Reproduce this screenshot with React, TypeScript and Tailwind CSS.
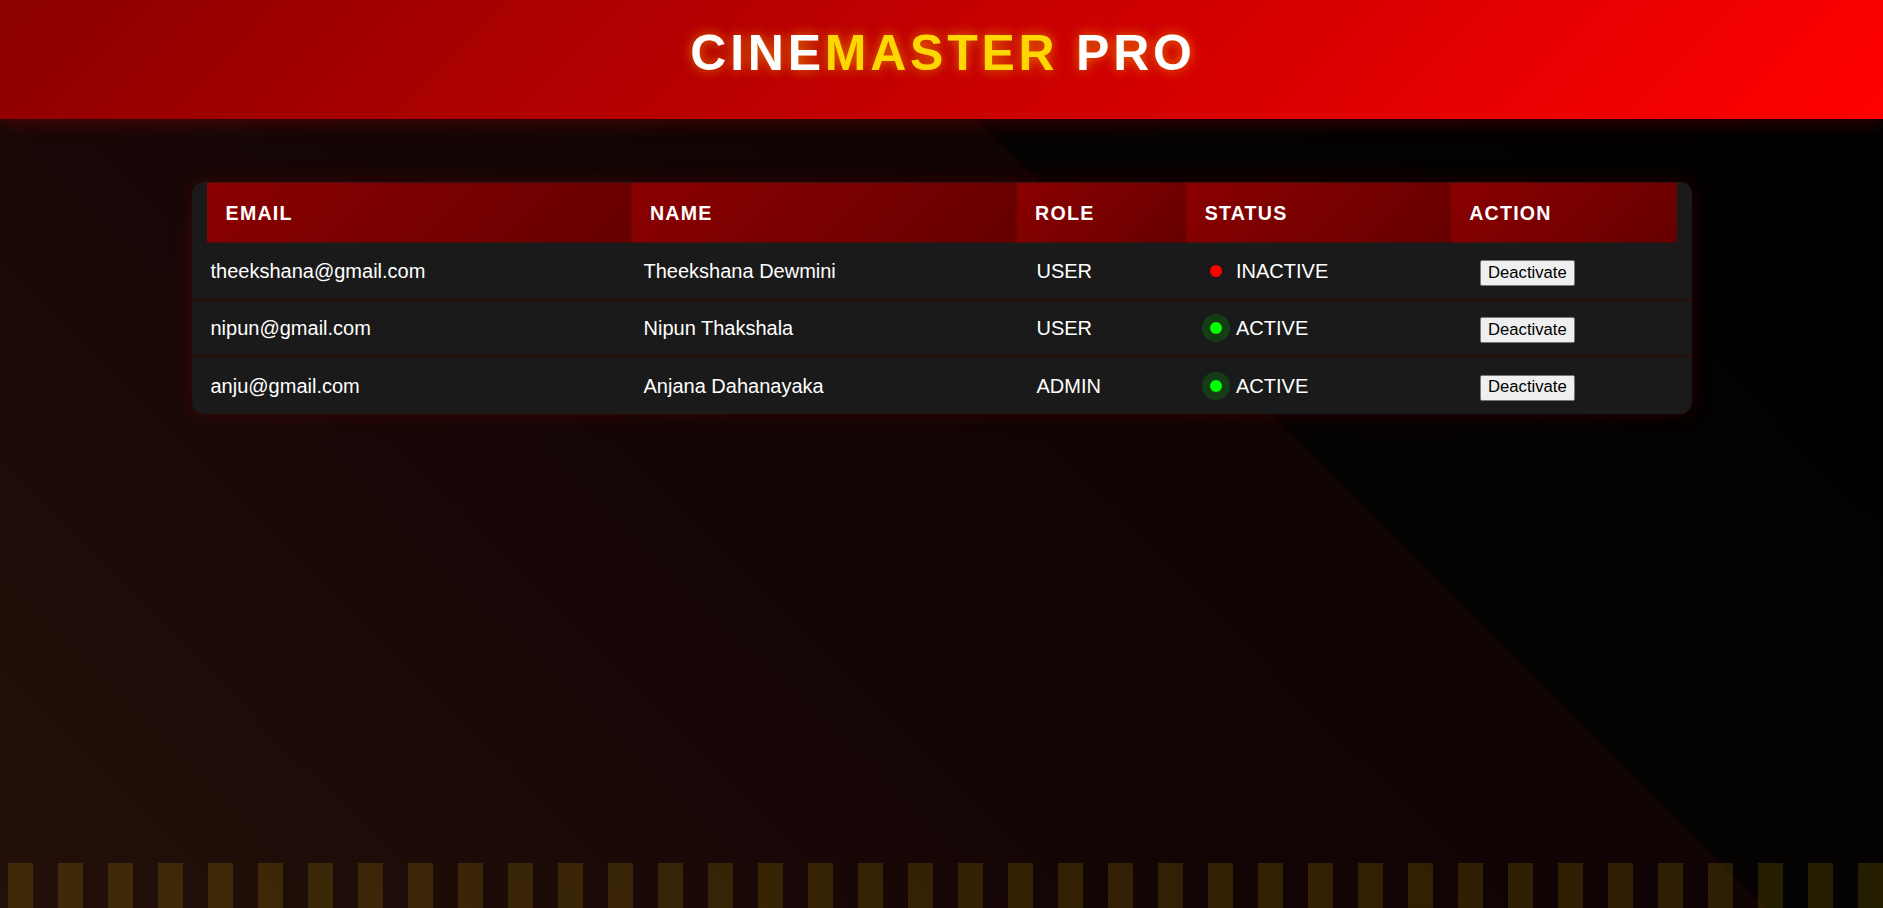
import React from "react";

type User = { email: string; name: string; role: string; active: boolean };

const users: User[] = [
    { email: "theekshana@gmail.com", name: "Theekshana Dewmini", role: "USER", active: false },
    { email: "nipun@gmail.com", name: "Nipun Thakshala", role: "USER", active: true },
    { email: "anju@gmail.com", name: "Anjana Dahanayaka", role: "ADMIN", active: true },
];

const headings = ["Email", "Name", "Role", "Status", "Action"];

const StatusBadge: React.FC<{ active: boolean }> = ({ active }) => (
    <div className="flex items-center gap-[14.5px]">
        {active ? (
            <span className="w-[12px] h-[12px] rounded-full bg-[#00ff00] shadow-[0_0_0_8px_rgba(0,255,0,0.15)]" />
        ) : (
            <span className="w-[12px] h-[12px] rounded-full bg-[#ff0000]" />
        )}
        <span>{active ? "ACTIVE" : "INACTIVE"}</span>
    </div>
);

const App: React.FC = () => {
    return (
        <div className="h-screen flex flex-col overflow-hidden bg-[linear-gradient(45deg,#231009_0%,#160606_35%,#0f0303_63.3%,#050202_63.3%,#000_100%)] font-['Liberation_Sans',Arial,sans-serif]">
            <header className="relative z-10 h-[119px] shrink-0 pt-[25px] pl-[3px] text-center bg-[linear-gradient(135deg,#8b0000,#ff0000)] shadow-[0_2px_20px_rgba(255,0,0,0.25)]">
                <h1 className="text-[50px] leading-[56px] font-bold tracking-[3.75px] text-white [text-shadow:0_0_12px_rgba(255,215,0,0.55)]">
                    CINE<span className="text-[#ffd700]">MASTER</span> PRO
                </h1>
            </header>

            <main className="flex-1 pt-[63px]">
                <div className="w-[1500px] mx-auto rounded-[12px] overflow-hidden bg-[#1a1a1a] shadow-[0_0_20px_rgba(255,0,0,0.15)]">
                    <div className="grid grid-cols-[433px_393px_173px_270px_231px] scale-[0.98]">
                        {headings.map((h) => (
                            <div
                                key={h}
                                className="h-[61px] flex items-center px-[19px] bg-[linear-gradient(135deg,#8b0000,#660000)] text-white text-[20px] font-bold uppercase tracking-[1.25px]"
                            >
                                {h}
                            </div>
                        ))}
                    </div>

                    {users.map((u) => (
                        <div
                            key={u.email}
                            className="grid grid-cols-[433px_393px_173px_270px_231px] h-[57px] items-center border-b border-[#3a0000] last:border-b-0 text-white text-[20px]"
                        >
                            <div className="px-[19px]">{u.email}</div>
                            <div className="px-[19px]">{u.name}</div>
                            <div className="px-[19px]">{u.role}</div>
                            <div className="px-[19px]">
                                <StatusBadge active={u.active} />
                            </div>
                            <div className="px-[19px]">
                                <button className="h-[26px] px-[7.5px] bg-[#efefef] border border-[#767676] rounded-[2px] text-black text-[16.67px] leading-none">
                                    Deactivate
                                </button>
                            </div>
                        </div>
                    ))}
                </div>
            </main>

            <div className="h-[45px] shrink-0 bg-[image:repeating-linear-gradient(90deg,transparent_0_8px,rgba(255,215,0,0.13)_8px_33px,transparent_33px_50px)]" />
        </div>
    );
};

export default App;
